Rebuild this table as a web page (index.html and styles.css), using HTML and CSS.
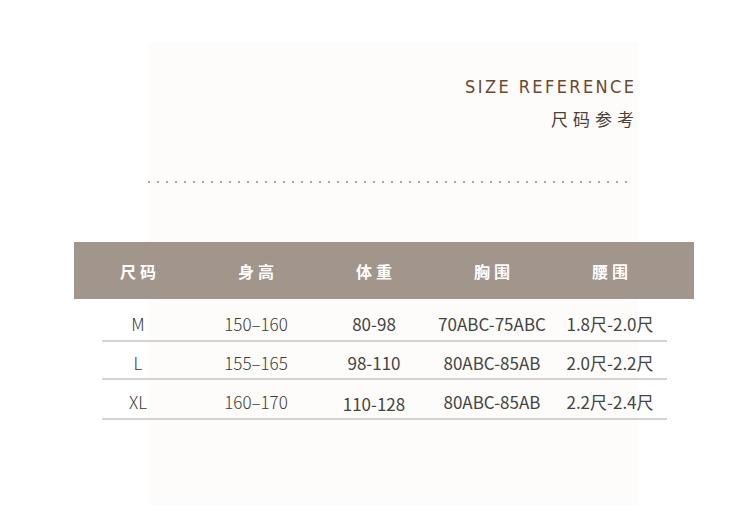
FILE: index.html
```html
<!DOCTYPE html>
<html lang="zh-CN">
<head>
<meta charset="utf-8">
<title>尺码参考</title>
<link rel="stylesheet" href="styles.css">
</head>
<body>
<div class="page">
  <div class="title">
    <div class="title-en">SIZE REFERENCE</div>
    <div class="title-cn">尺码参考</div>
  </div>
  <div class="dots"></div>
  <div class="table">
    <div class="thead">
      <div class="cell">尺码</div>
      <div class="cell">身高</div>
      <div class="cell">体重</div>
      <div class="cell">胸围</div>
      <div class="cell">腰围</div>
    </div>
    <div class="row r1">
      <div class="cells">
        <div class="cell light">M</div>
        <div class="cell light">150–160</div>
        <div class="cell">80-98</div>
        <div class="cell">70ABC-75ABC</div>
        <div class="cell">1.8尺-2.0尺</div>
      </div>
    </div>
    <div class="row r2">
      <div class="cells">
        <div class="cell light">L</div>
        <div class="cell light">155–165</div>
        <div class="cell">98-110</div>
        <div class="cell">80ABC-85AB</div>
        <div class="cell">2.0尺-2.2尺</div>
      </div>
    </div>
    <div class="row r3">
      <div class="cells">
        <div class="cell light">XL</div>
        <div class="cell light">160–170</div>
        <div class="cell low">110-128</div>
        <div class="cell">80ABC-85AB</div>
        <div class="cell">2.2尺-2.4尺</div>
      </div>
    </div>
  </div>
</div>
</body>
</html>
```

FILE: styles.css
```css
* { box-sizing: border-box; }
html, body { margin: 0; padding: 0; background: #ffffff; }
.page {
  width: 750px;
  height: 517px;
  overflow: hidden;
  background: linear-gradient(#fdfcfb, #fdfcfb) no-repeat 148px 42px / 490px 463px, #ffffff;
  padding-top: 76px;
  font-family: "Noto Sans CJK SC", "Noto Sans", sans-serif;
}
.title {
  display: flex;
  flex-direction: column;
  align-items: flex-end;
  padding-right: 116px;
}
.title-en {
  font-family: "DejaVu Sans", sans-serif;
  font-stretch: condensed;
  font-size: 18px;
  line-height: 22px;
  letter-spacing: 2.4px;
  margin-right: -2.4px;
  color: #6a4830;
}
.title-cn {
  margin-top: 10px;
  font-size: 17px;
  line-height: 22px;
  letter-spacing: 5px;
  margin-right: -5px;
  color: #4f4036;
}
.dots {
  margin: 51px 0 0 148px;
  width: 486px;
  height: 2px;
  background: linear-gradient(to right, #b3a498 2px, transparent 2px) repeat-x 0 0 / 9px 2px;
}
.table {
  margin: 59px 0 0 74px;
  width: 620px;
}
.thead {
  height: 57px;
  background: #a2958c;
  display: grid;
  grid-template-columns: repeat(5, 118px);
  align-items: center;
  padding-left: 5px;
  color: #ffffff;
  font-weight: 700;
  font-size: 16px;
  letter-spacing: 4px;
}
.thead .cell { text-align: center; text-indent: 4px; }
.row {
  margin: 0 27px 0 28px;
  border-bottom: 2px solid #d2d2d2;
}
.r1 { height: 43px; padding-top: 7px; }
.r2 { height: 38px; padding-top: 4px; }
.r3 { height: 40px; padding-top: 5px; }
.cells {
  margin-left: -23px;
  width: 590px;
  height: 100%;
  display: grid;
  grid-template-columns: repeat(5, 118px);
  align-items: center;
  font-size: 17px;
  color: #444444;
}
.cell { text-align: center; white-space: nowrap; }
.light { font-weight: 300; color: #3a3a3a; }
.low { padding-top: 4px; }
```
